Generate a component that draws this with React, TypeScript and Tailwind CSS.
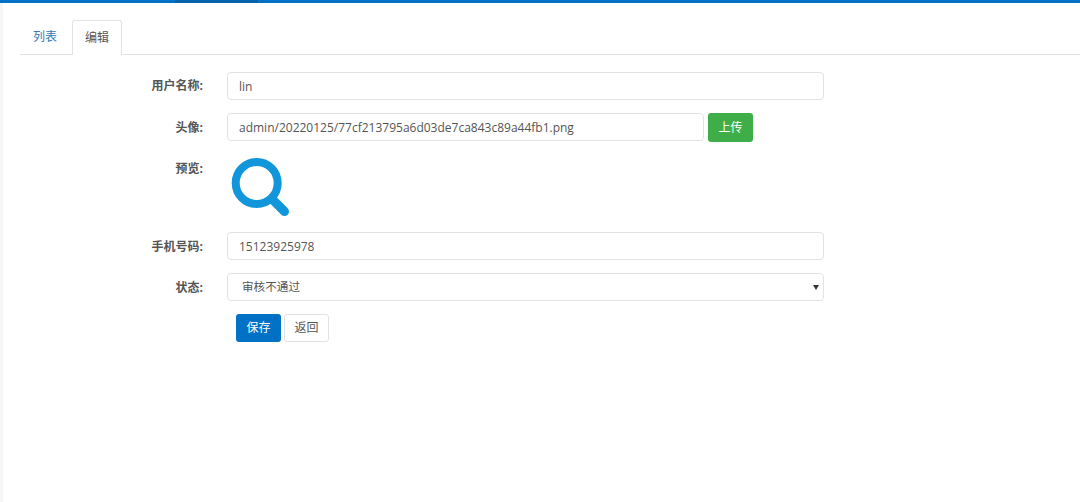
const font = "[font-family:'Open_Sans','Noto_Sans_CJK_SC',sans-serif]";

function Label({ children }: { children: string }) {
    return <label className="block w-[183px] shrink-0 text-right text-xs font-bold text-[#555]">{children}</label>;
}

function TextInput({ value }: { value: string }) {
    return (
        <input
            readOnly
            value={value}
            className="h-7 min-w-0 flex-1 rounded-[4px] border border-[#e1e2e3] bg-white px-[11px] text-xs text-[#555] outline-none"
        />
    );
}

export default function App() {
    return (
        <div className={`${font} relative h-[502px] w-[1080px] overflow-hidden bg-white`}>
            <div className="flex h-[3px] bg-[#0071c5]">
                <div className="ml-[175px] w-[83px] bg-[#0062ab]" />
            </div>
            <div className="flex h-[499px]">
                <div className="w-[3px] shrink-0 bg-[#f6f6f6]" />
                <div className="flex-1 pl-[17px] pt-[17px]">
                    <div className="flex h-[35px] border-b border-[#e1e2e3] text-xs">
                        <a className="flex h-[34px] w-[50px] items-center justify-center text-[#337ab7]">列表</a>
                        <a className="ml-[2px] flex h-[35px] w-[50px] items-center justify-center rounded-t-[3px] border border-b-0 border-[#e1e2e3] bg-white text-[#555]">编辑</a>
                    </div>

                    <div className="w-[804px] pt-[17px]">
                        <div className="flex items-center">
                            <Label>用户名称:</Label>
                            <div className="ml-[24px] flex flex-1"><TextInput value="lin" /></div>
                        </div>
                        <div className="mt-[13px] flex items-center">
                            <Label>头像:</Label>
                            <div className="ml-[24px] flex flex-1 gap-1 pr-[71px]">
                                <TextInput value="admin/20220125/77cf213795a6d03de7ca843c89a44fb1.png" />
                                <button className="h-[29px] w-[45px] shrink-0 rounded-[3px] bg-[#3fae49] text-xs text-white">上传</button>
                            </div>
                        </div>
                        <div className="mt-[14px] flex h-[76px] items-start">
                            <div className="w-[183px] shrink-0 pt-[5px]"><Label>预览:</Label></div>
                            <div className="ml-[24px] pl-[4px] pt-[1px]">
                                <svg width="60" height="60" viewBox="0 0 60 60" fill="none" stroke="#1296db">
                                    <circle cx="25.7" cy="26" r="21" strokeWidth="8" />
                                    <path d="M41 42 L53.5 54.5" strokeWidth="9" strokeLinecap="round" />
                                </svg>
                            </div>
                        </div>
                        <div className="flex items-center">
                            <div className="w-[183px] shrink-0 pt-[1px]"><Label>手机号码:</Label></div>
                            <div className="ml-[24px] flex flex-1"><TextInput value="15123925978" /></div>
                        </div>
                        <div className="mt-[13px] flex items-center">
                            <div className="w-[183px] shrink-0 pt-[1px]"><Label>状态:</Label></div>
                            <div className="relative ml-[24px] flex h-7 flex-1 items-center rounded-[4px] border border-[#e1e2e3] bg-white pl-[14px] text-[11.6px] text-[#555]">
                                审核不通过
                                <span className="absolute right-[4px] top-[11px] h-0 w-0 border-x-[3px] border-t-[5px] border-x-transparent border-t-[#333]" />
                            </div>
                        </div>
                        <div className="ml-[216px] mt-[13px] flex gap-[3px] text-xs">
                            <button className="h-[28px] w-[45px] rounded-[3px] bg-[#0071c5] text-white">保存</button>
                            <button className="h-[28px] w-[45px] rounded-[3px] border border-[#e1e2e3] bg-white text-[#555]">返回</button>
                        </div>
                    </div>
                </div>
            </div>
        </div>
    );
}
